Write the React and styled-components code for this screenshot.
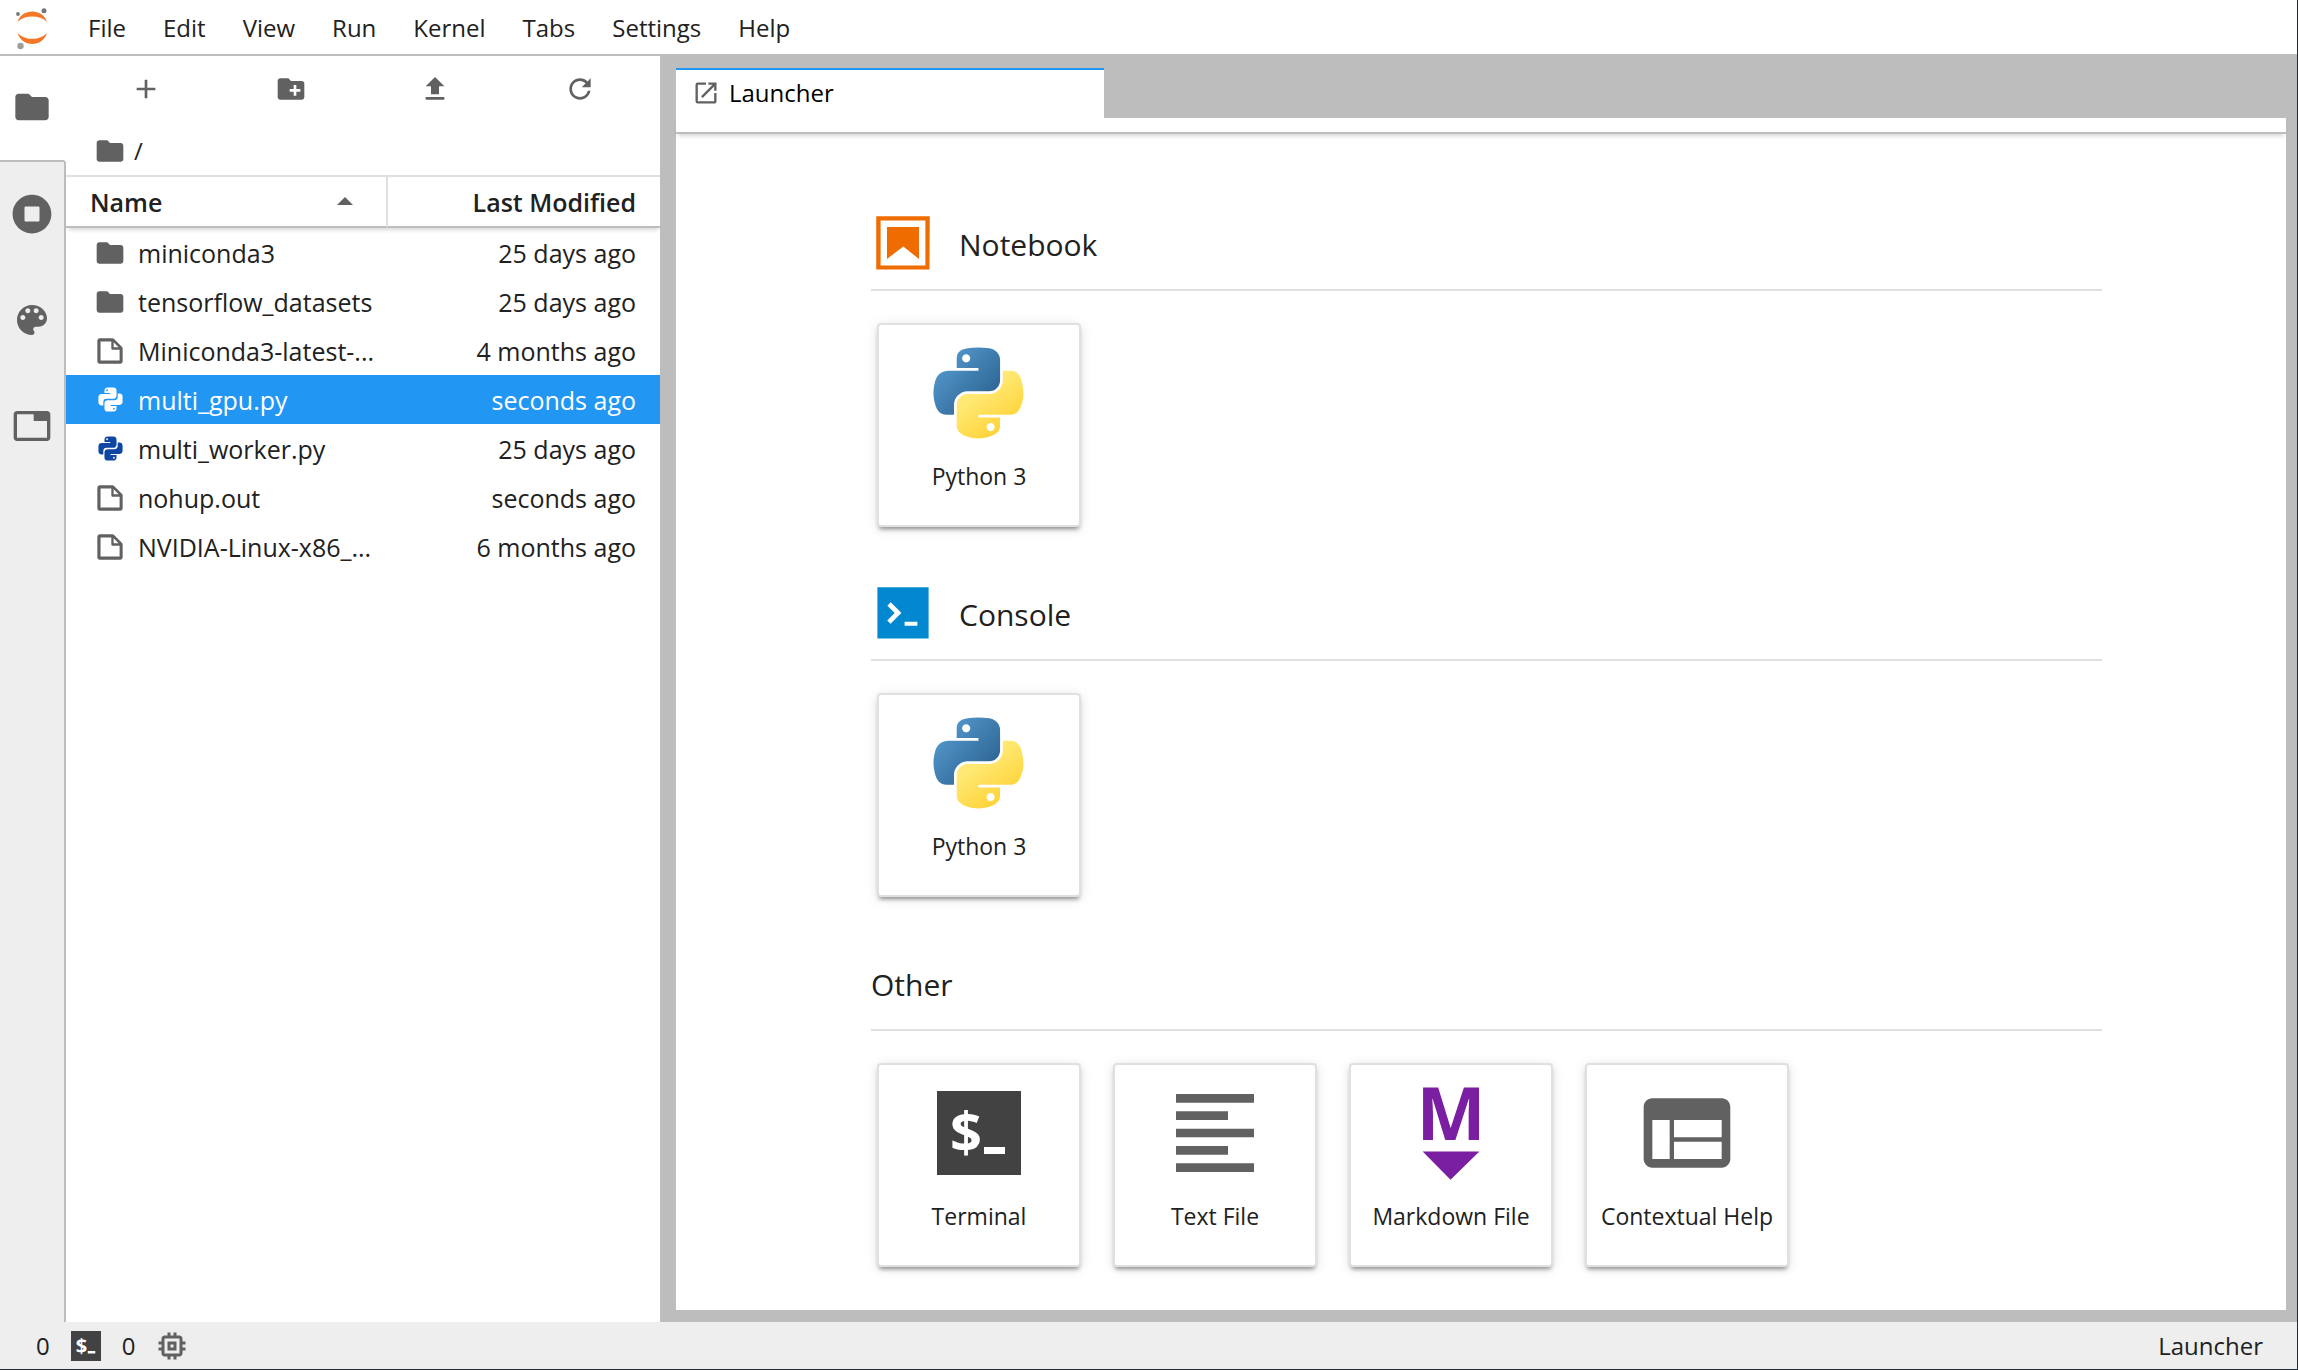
import React from 'react';
import styled, { createGlobalStyle, css } from 'styled-components';

const color = {
  text: '#212121',
  icon: '#616161',
  border: '#bdbdbd',
  borderLight: '#e0e0e0',
  panel: '#ffffff',
  rail: '#eeeeee',
  brand: '#2196f3',
  edge: '#242936',
};

const GlobalStyle = createGlobalStyle`
  *, *::before, *::after { box-sizing: border-box; }
  html, body, #root { height: 100%; }
  body {
    margin: 0;
    overflow: hidden;
    color: ${color.text};
    background: ${color.panel};
    font-family: "Open Sans", "Noto Sans", sans-serif;
    font-size: 24px;
    line-height: 32px;
  }
  svg { display: block; flex: none; }
`;

const plainButton = css`
  margin: 0;
  padding: 0;
  border: 0;
  background: none;
  color: inherit;
  font: inherit;
  cursor: pointer;
`;

const Shell = styled.div`
  display: flex;
  flex-direction: column;
  height: 100%;
  border-right: 1px solid ${color.edge};
  border-bottom: 1px solid ${color.edge};
`;

const MenuBar = styled.header`
  display: flex;
  align-items: stretch;
  height: 56px;
  border-bottom: 2px solid ${color.border};
`;

const LogoSlot = styled.div`
  display: flex;
  width: 70px;
`;

const MenuNav = styled.nav`
  display: flex;
  gap: 1px;
`;

const MenuItem = styled.button`
  ${plainButton}
  padding: 2px 18px 0;
`;

const Workspace = styled.div`
  display: flex;
  flex: 1;
  min-height: 0;
`;

const Rail = styled.nav`
  display: flex;
  flex-direction: column;
  width: 66px;
  background: ${color.rail};
`;

const RailTab = styled.button`
  ${plainButton}
  display: flex;
  align-items: center;
  justify-content: center;
  height: 106px;
  padding-bottom: 2px;
  color: ${color.icon};
  background: ${(p) => (p.$active ? color.panel : color.rail)};
  border-right: 2px solid ${(p) => (p.$active ? color.panel : color.border)};
  border-bottom: ${(p) => (p.$active ? `2px solid ${color.border}` : '0')};
`;

const RailRest = styled.div`
  flex: 1;
  border-right: 2px solid ${color.border};
`;

const Browser = styled.section`
  display: flex;
  flex-direction: column;
  width: 594px;
  background: ${color.panel};
`;

const Toolbar = styled.div`
  display: grid;
  grid-template-columns: repeat(4, 1fr);
  height: 66px;
  padding: 0 8px;
`;

const ToolButton = styled.button`
  ${plainButton}
  display: flex;
  align-items: center;
  justify-content: center;
  color: ${color.icon};
`;

const Crumbs = styled.div`
  display: flex;
  align-items: center;
  gap: 8px;
  height: 53px;
  padding: 4px 28px 0;

  svg { color: ${color.icon}; }
`;

const FileTable = styled.table`
  width: 100%;
  table-layout: fixed;
  border-collapse: separate;
  border-spacing: 0;
  font-size: 25px;

  thead { box-shadow: 0 4px 4px -2px rgba(0, 0, 0, 0.16); }
  th, td { padding: 0 24px; text-align: left; white-space: nowrap; }
`;

const HeadCell = styled.th`
  width: ${(p) => (p.$wide ? '322px' : 'auto')};
  height: 53px;
  border-top: 2px solid ${color.borderLight};
  border-bottom: 2px solid ${color.border};
  border-right: ${(p) => (p.$wide ? `2px solid ${color.borderLight}` : '0')};
  font-weight: 600;
`;

const SortButton = styled.button`
  ${plainButton}
  display: flex;
  align-items: center;
  justify-content: ${(p) => (p.$end ? 'flex-end' : 'space-between')};
  width: 100%;
`;

const FileRow = styled.tr`
  height: 49px;
  color: ${(p) => (p.$selected ? '#ffffff' : color.text)};
  background: ${(p) => (p.$selected ? color.brand : 'transparent')};

  td:last-child { text-align: right; }
`;

const FileName = styled.div`
  display: flex;
  align-items: center;
  gap: 12px;
  margin-left: 4px;
`;

const Dock = styled.main`
  display: flex;
  flex: 1;
  flex-direction: column;
  min-width: 0;
  padding: 12px 11px 12px 16px;
  background: ${color.border};
`;

const TabStrip = styled.div`
  display: flex;
  height: 50px;
`;

const DockTab = styled.button`
  ${plainButton}
  display: flex;
  align-items: center;
  gap: 9px;
  width: 428px;
  padding: 0 16px 2px;
  color: #000000;
  background: ${color.panel};
  border-top: 2px solid ${color.brand};

  svg { color: ${color.icon}; }
`;

const TabBase = styled.div`
  z-index: 1;
  height: 16px;
  background: ${color.panel};
  border-bottom: 2px solid ${color.border};
  box-shadow: 0 4px 4px -2px rgba(0, 0, 0, 0.16);
`;

const Launcher = styled.div`
  display: flex;
  flex: 1;
  flex-direction: column;
  gap: 54px;
  min-height: 0;
  padding: 77px 184px 0 195px;
  background: ${color.panel};
`;

const SectionHead = styled.div`
  display: flex;
  align-items: center;
  gap: 24px;
  height: 80px;
  padding-bottom: 14px;
  border-bottom: 2px solid ${color.borderLight};
`;

const SectionTitle = styled.h2`
  margin: 0;
  padding-top: 4px;
  font-size: 30px;
  font-weight: 400;
  line-height: 40px;
`;

const CardRow = styled.div`
  display: flex;
  flex-wrap: wrap;
  gap: 32px;
  padding: 32px 6px 0;
`;

const Card = styled.button`
  ${plainButton}
  display: flex;
  flex-direction: column;
  align-items: center;
  gap: 15px;
  width: 204px;
  height: 204px;
  padding-top: 16px;
  border: 2px solid ${color.borderLight};
  border-radius: 4px;
  background: ${color.panel};
  box-shadow: 0 4px 4px -2px rgba(0, 0, 0, 0.4), 0 2px 12px rgba(0, 0, 0, 0.12);
  font-size: 23px;
  line-height: 32px;
  white-space: nowrap;
`;

const StatusBar = styled.footer`
  display: flex;
  align-items: center;
  justify-content: space-between;
  height: 47px;
  padding: 1px 34px 0 36px;
  background: ${color.rail};
`;

const StatusGroup = styled.div`
  display: flex;
  align-items: center;
  gap: 21px;

  svg:last-child { margin-left: -2px; color: ${color.icon}; }
`;

const Glyph = ({ d, size = 32, box = 24, flip = false }) => (
  <svg width={size} height={size} viewBox={`0 0 ${box} ${box}`} fill="currentColor" aria-hidden="true">
    <path d={d} transform={flip ? `translate(${box} 0) scale(-1 1)` : undefined} />
  </svg>
);

const paths = {
  folder: 'M10 4H4c-1.1 0-1.99.9-1.99 2L2 18c0 1.1.9 2 2 2h16c1.1 0 2-.9 2-2V8c0-1.1-.9-2-2-2h-8l-2-2z',
  running: 'M256 8C119 8 8 119 8 256s111 248 248 248 248-111 248-248S393 8 256 8zm96 328c0 8.8-7.2 16-16 16H176c-8.8 0-16-7.2-16-16V176c0-8.8 7.2-16 16-16h160c8.8 0 16 7.2 16 16v160z',
  palette: 'M12 3c-4.97 0-9 4.03-9 9s4.03 9 9 9c.83 0 1.5-.67 1.5-1.5 0-.39-.15-.74-.39-1.01-.23-.26-.38-.61-.38-.99 0-.83.67-1.5 1.5-1.5H16c2.76 0 5-2.24 5-5 0-4.42-4.03-8-9-8zm-5.5 9c-.83 0-1.5-.67-1.5-1.5S5.67 9 6.5 9 8 9.67 8 10.5 7.33 12 6.5 12zm3-4C8.67 8 8 7.33 8 6.5S8.67 5 9.5 5s1.5.67 1.5 1.5S10.33 8 9.5 8zm5 0c-.83 0-1.5-.67-1.5-1.5S13.67 5 14.5 5s1.5.67 1.5 1.5S15.33 8 14.5 8zm3 4c-.83 0-1.5-.67-1.5-1.5S16.67 9 17.5 9s1.5.67 1.5 1.5-.67 1.5-1.5 1.5z',
  tabs: 'M21 3H3c-1.1 0-2 .9-2 2v14c0 1.1.9 2 2 2h18c1.1 0 2-.9 2-2V5c0-1.1-.9-2-2-2zm0 16H3V5h10v4h8v10z',
  add: 'M19 13h-6v6h-2v-6H5v-2h6V5h2v6h6v2z',
  newFolder: 'M20 6h-8l-2-2H4c-1.11 0-1.99.89-1.99 2L2 18c0 1.11.89 2 2 2h16c1.11 0 2-.89 2-2V8c0-1.11-.89-2-2-2zm-1 8h-3v3h-2v-3h-3v-2h3V9h2v3h3v2z',
  upload: 'M9 16h6v-6h4l-7-7-7 7h4zm-4 2h14v2H5z',
  refresh: 'M9 13.5c-2.49 0-4.5-2.01-4.5-4.5S6.51 4.5 9 4.5c1.24 0 2.36.52 3.17 1.33L10 8h5V3l-1.76 1.76C12.15 3.68 10.66 3 9 3 5.69 3 3.01 5.69 3.01 9S5.69 15 9 15c2.97 0 5.43-2.16 5.9-5h-1.52c-.46 2-2.24 3.5-4.38 3.5z',
  file: 'M19.3 8.2l-5.5-5.5c-.3-.3-.7-.5-1.2-.5H3.9c-.8.1-1.6.9-1.6 1.8v14.1c0 .9.7 1.6 1.6 1.6h14.2c.9 0 1.6-.7 1.6-1.6V9.4c.1-.5-.1-.9-.4-1.2zm-5.8-3.3l3.4 3.6h-3.4V4.9zm3.9 12.7H4.7c-.1 0-.2 0-.2-.2V4.7c0-.2.1-.3.2-.3h7.2v4.4s0 .8.3 1.1c.3.3 1.1.3 1.1.3h4.3v7.2s-.1.2-.2.2z',
  python: 'M9.86 2A2.86 2.86 0 0 0 7 4.86v1.68h4.29c.39 0 .71.57.71.96H4.86A2.86 2.86 0 0 0 2 10.36v3.781a2.86 2.86 0 0 0 2.86 2.86h1.18v-2.68a2.85 2.85 0 0 1 2.85-2.86h5.25c1.58 0 2.86-1.271 2.86-2.851V4.86A2.86 2.86 0 0 0 14.14 2zm-.72 1.61c.4 0 .72.12.72.71s-.32.891-.72.891c-.39 0-.71-.3-.71-.89s.32-.711.71-.711zM17.959 7v2.68a2.85 2.85 0 0 1-2.85 2.859H9.86A2.85 2.85 0 0 0 7 15.389v3.75a2.86 2.86 0 0 0 2.86 2.86h4.28A2.86 2.86 0 0 0 17 19.14v-1.68h-4.291c-.39 0-.709-.57-.709-.96h7.14A2.86 2.86 0 0 0 22 13.64V9.86A2.86 2.86 0 0 0 19.14 7zm-3.099 11.789c.39 0 .71.3.71.89a.71.71 0 0 1-.71.71c-.4 0-.72-.12-.72-.71s.32-.89.72-.89z',
  launch: 'M19 19H5V5h7V3H5a2 2 0 0 0-2 2v14a2 2 0 0 0 2 2h14c1.1 0 2-.9 2-2v-7h-2v7zM14 3v2h3.59l-9.83 9.83 1.41 1.41L19 6.41V10h2V3h-7z',
  textFile: 'M15 15H3v2h12v-2zm0-8H3v2h12V7zM3 13h18v-2H3v2zm0 8h18v-2H3v2zM3 3v2h18V3H3z',
  inspector: 'M20 4H4c-1.1 0-1.99.9-1.99 2L2 18c0 1.1.9 2 2 2h16c1.1 0 2-.9 2-2V6c0-1.1-.9-2-2-2zm-5 14H4v-4h11v4zm0-5H4V9h11v4zm5 5h-4V9h4v9z',
  chip: 'M15 9H9v6h6V9zm-2 4h-2v-2h2v2zm8-2V9h-2V7c0-1.1-.9-2-2-2h-2V3h-2v2h-2V3H9v2H7c-1.1 0-2 .9-2 2v2H3v2h2v2H3v2h2v2c0 1.1.9 2 2 2h2v2h2v-2h2v2h2v-2h2c1.1 0 2-.9 2-2v-2h2v-2h-2v-2h2zm-4 6H7V7h10v10z',
};

const JupyterLogo = () => (
  <svg width="68" height="54" viewBox="0 0 68 54" aria-hidden="true">
    <g fill="#f37726">
      <path d="M17.5 22C22 8.100 42.500 8.100 47 22C40 14.800 24.500 14.800 17.500 22z" />
      <path d="M17.5 33C22 47.700 42.500 47.700 47 33C40 40.700 24.500 40.700 17.500 33z" />
    </g>
    <circle cx="44" cy="10.700" r="2.500" fill="#767677" />
    <circle cx="18" cy="14" r="1.900" fill="#767677" />
    <circle cx="20.500" cy="46" r="3.200" fill="#9e9e9e" />
  </svg>
);

const PythonLogo = ({ id }) => (
  <svg width="104" height="104" viewBox="-8 -8 128.5 128.5" aria-hidden="true">
    <defs>
      <linearGradient id={`${id}-blue`} x1="0" y1="0.1" x2="0.75" y2="0.8">
        <stop offset="0" stopColor="#5a9fd4" />
        <stop offset="1" stopColor="#306998" />
      </linearGradient>
      <linearGradient id={`${id}-yellow`} x1="0.75" y1="0.8" x2="0.4" y2="0.3">
        <stop offset="0" stopColor="#ffd43b" />
        <stop offset="1" stopColor="#ffe873" />
      </linearGradient>
    </defs>
    <path fill={`url(#${id}-blue)`} d="M54.919 0C50.335.022 45.958.413 42.106 1.095 30.76 3.099 28.7 7.295 28.7 15.032v10.219h26.813v3.406H18.638c-7.793 0-14.616 4.684-16.75 13.594-2.462 10.213-2.571 16.586 0 27.25 1.906 7.938 6.457 13.594 14.25 13.594h9.219v-12.25c0-8.85 7.657-16.656 16.75-16.656h26.781c7.455 0 13.406-6.138 13.406-13.625V15.032c0-7.266-6.13-12.725-13.406-13.937C64.282.328 59.502-.02 54.919 0zm-14.5 8.22c2.769 0 5.031 2.298 5.031 5.125 0 2.816-2.262 5.094-5.031 5.094-2.78 0-5.031-2.278-5.031-5.094 0-2.827 2.251-5.125 5.031-5.125z" />
    <path fill={`url(#${id}-yellow)`} d="M85.638 28.657v11.906c0 9.231-7.826 17-16.75 17H42.106c-7.336 0-13.406 6.279-13.406 13.625v25.531c0 7.267 6.318 11.541 13.406 13.625 8.487 2.496 16.626 2.947 26.781 0 6.75-1.954 13.407-5.887 13.407-13.625V86.501H55.513v-3.406H95.7c7.793 0 10.697-5.436 13.407-13.594 2.799-8.399 2.68-16.476 0-27.25-1.926-7.758-5.604-13.594-13.407-13.594zM70.575 93.313c2.78 0 5.031 2.278 5.031 5.094 0 2.826-2.251 5.125-5.031 5.125-2.769 0-5.031-2.299-5.031-5.125 0-2.816 2.262-5.094 5.031-5.094z" />
  </svg>
);

const NotebookIcon = () => (
  <svg width="64" height="64" viewBox="0 0 22 22" fill="#ef6c00" aria-hidden="true">
    <path d="M18.7 3.3v15.4H3.3V3.3h15.4m1.5-1.5H1.8v18.3h18.3l.1-18.3z" />
    <path d="M16.5 16.5l-5.4-4.3-5.6 4.3v-11h11z" />
  </svg>
);

const ConsoleIcon = () => (
  <svg width="64" height="64" viewBox="0 0 200 200" aria-hidden="true">
    <path fill="#0288d1" d="M20 19.8h160v159.9H20z" />
    <path fill="#fff" d="M105 127.3h40v12.8h-40zM51.1 77L74 99.9l-23.3 23.3 10.5 10.5 23.3-23.3L95 99.9 84.5 89.4 61.6 66.5z" />
  </svg>
);

const TerminalIcon = ({ size }) => (
  <svg width={size} height={size} viewBox="0 0 84 84" aria-hidden="true">
    <path fill="#424242" d="M0 0h84v84H0z" />
    <text x="29" y="61" fill="#fff" textAnchor="middle" fontFamily="Open Sans, sans-serif" fontSize="56" fontWeight="700">$</text>
    <path fill="#fff" d="M47 56h21v7H47z" />
  </svg>
);

const TerminalTile = styled.div`
  padding: 10px;
`;

const MarkdownIcon = () => (
  <svg width="104" height="104" viewBox="0 0 22 22" overflow="visible" fill="#7b1fa2" aria-hidden="true">
    <text x="11" y="12.4" textAnchor="middle" fontFamily="Open Sans, sans-serif" fontSize="15.5" fontWeight="700">M</text>
    <path d="M5 14.9h12l-6.1 6z" />
  </svg>
);

const Tinted = styled.span`
  display: flex;
  justify-content: center;
  width: 32px;
  color: ${(p) => p.$tint};
`;

const menus = ['File', 'Edit', 'View', 'Run', 'Kernel', 'Tabs', 'Settings', 'Help'];

const railTabs = [
  { label: 'File Browser', d: paths.folder, active: true },
  { label: 'Running Terminals and Kernels', d: paths.running, box: 512 },
  { label: 'Commands', d: paths.palette },
  { label: 'Open Tabs', d: paths.tabs },
];

const tools = [
  { label: 'New Launcher', d: paths.add },
  { label: 'New Folder', d: paths.newFolder },
  { label: 'Upload Files', d: paths.upload },
  { label: 'Refresh File List', d: paths.refresh, box: 18 },
];

const files = [
  { name: 'miniconda3', modified: '25 days ago', kind: 'folder' },
  { name: 'tensorflow_datasets', modified: '25 days ago', kind: 'folder' },
  { name: 'Miniconda3-latest-...', modified: '4 months ago', kind: 'file' },
  { name: 'multi_gpu.py', modified: 'seconds ago', kind: 'python', selected: true },
  { name: 'multi_worker.py', modified: '25 days ago', kind: 'python' },
  { name: 'nohup.out', modified: 'seconds ago', kind: 'file' },
  { name: 'NVIDIA-Linux-x86_...', modified: '6 months ago', kind: 'file' },
];

const sections = [
  {
    title: 'Notebook',
    icon: <NotebookIcon />,
    cards: [{ label: 'Python 3', icon: <PythonLogo id="notebook" /> }],
  },
  {
    title: 'Console',
    icon: <ConsoleIcon />,
    cards: [{ label: 'Python 3', icon: <PythonLogo id="console" /> }],
  },
  {
    title: 'Other',
    cards: [
      { label: 'Terminal', icon: <TerminalTile><TerminalIcon size={84} /></TerminalTile> },
      { label: 'Text File', icon: <Tinted $tint={color.icon}><Glyph d={paths.textFile} size={104} /></Tinted> },
      { label: 'Markdown File', icon: <MarkdownIcon /> },
      { label: 'Contextual Help', icon: <Tinted $tint={color.icon}><Glyph d={paths.inspector} size={104} flip /></Tinted> },
    ],
  },
];

function FileIcon({ kind, selected }) {
  if (kind === 'python') {
    return <Tinted $tint={selected ? '#ffffff' : '#0d47a1'}><Glyph d={paths.python} size={29} /></Tinted>;
  }
  return <Tinted $tint={color.icon}><Glyph d={paths[kind]} box={kind === 'file' ? 22 : 24} /></Tinted>;
}

export default function App() {
  return (
    <>
      <GlobalStyle />
      <Shell>
        <MenuBar>
          <LogoSlot><JupyterLogo /></LogoSlot>
          <MenuNav aria-label="Main menu">
            {menus.map((m) => <MenuItem key={m}>{m}</MenuItem>)}
          </MenuNav>
        </MenuBar>

        <Workspace>
          <Rail aria-label="Sidebar">
            {railTabs.map((t) => (
              <RailTab key={t.label} $active={t.active} aria-label={t.label}>
                <Glyph d={t.d} box={t.box} size={40} />
              </RailTab>
            ))}
            <RailRest />
          </Rail>

          <Browser aria-label="File browser">
            <Toolbar>
              {tools.map((t) => (
                <ToolButton key={t.label} aria-label={t.label}>
                  <Glyph d={t.d} box={t.box} />
                </ToolButton>
              ))}
            </Toolbar>
            <Crumbs>
              <Glyph d={paths.folder} />
              <span>/</span>
            </Crumbs>
            <FileTable>
              <thead>
                <tr>
                  <HeadCell $wide>
                    <SortButton>
                      Name
                      <svg width="34" height="16" viewBox="0 0 34 16" fill={color.icon} aria-hidden="true">
                        <path d="M9 11l8-8 8 8z" />
                      </svg>
                    </SortButton>
                  </HeadCell>
                  <HeadCell><SortButton $end>Last Modified</SortButton></HeadCell>
                </tr>
              </thead>
              <tbody>
                {files.map((f) => (
                  <FileRow key={f.name} $selected={f.selected}>
                    <td>
                      <FileName>
                        <FileIcon kind={f.kind} selected={f.selected} />
                        {f.name}
                      </FileName>
                    </td>
                    <td>{f.modified}</td>
                  </FileRow>
                ))}
              </tbody>
            </FileTable>
          </Browser>

          <Dock>
            <TabStrip>
              <DockTab>
                <Glyph d={paths.launch} size={28} />
                Launcher
              </DockTab>
            </TabStrip>
            <TabBase />
            <Launcher>
              {sections.map((s) => (
                <section key={s.title}>
                  <SectionHead>
                    {s.icon}
                    <SectionTitle>{s.title}</SectionTitle>
                  </SectionHead>
                  <CardRow>
                    {s.cards.map((c) => (
                      <Card key={c.label}>
                        {c.icon}
                        {c.label}
                      </Card>
                    ))}
                  </CardRow>
                </section>
              ))}
            </Launcher>
          </Dock>
        </Workspace>

        <StatusBar>
          <StatusGroup>
            <span>0</span>
            <TerminalIcon size={30} />
            <span>0</span>
            <Glyph d={paths.chip} size={36} />
          </StatusGroup>
          <span>Launcher</span>
        </StatusBar>
      </Shell>
    </>
  );
}
